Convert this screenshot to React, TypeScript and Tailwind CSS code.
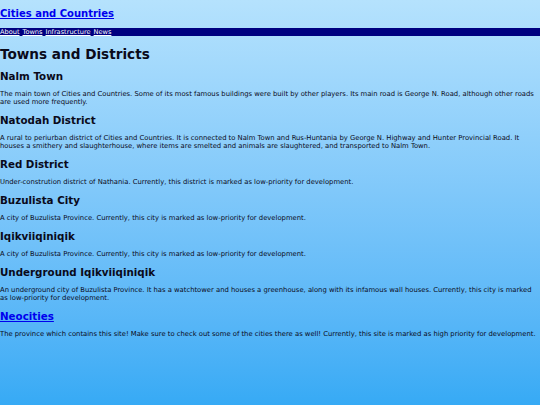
const sections = [
  {
    title: 'Nalm Town',
    text: 'The main town of Cities and Countries. Some of its most famous buildings were built by other players. Its main road is George N. Road, although other roads are used more frequently.',
  },
  {
    title: 'Natodah District',
    text: 'A rural to periurban district of Cities and Countries. It is connected to Nalm Town and Rus-Huntania by George N. Highway and Hunter Provincial Road. It houses a smithery and slaughterhouse, where items are smelted and animals are slaughtered, and transported to Nalm Town.',
  },
  {
    title: 'Red District',
    text: 'Under-constrution district of Nathania. Currently, this district is marked as low-priority for development.',
  },
  {
    title: 'Buzulista City',
    text: 'A city of Buzulista Province. Currently, this city is marked as low-priority for development.',
  },
  {
    title: 'Iqikviiqiniqik',
    text: 'A city of Buzulista Province. Currently, this city is marked as low-priority for development.',
  },
  {
    title: 'Underground Iqikviiqiniqik',
    text: 'An underground city of Buzulista Province. It has a watchtower and houses a greenhouse, along with its infamous wall houses. Currently, this city is marked as low-priority for development.',
  },
]

export default function App() {
  return (
    <div
      className="min-h-[405px] w-[540px] bg-gradient-to-b from-[#b5e2fd] to-[#36aaf5] text-[#0a0a1a]"
      style={{ fontFamily: '"DejaVu Sans", Verdana, sans-serif' }}
    >
      {/* Header */}
      <header className="pt-[6px] pb-[6px]">
        <a href="#" className="block text-[10px] leading-[16px] font-bold text-[#0000ee] underline">
          Cities and Countries
        </a>
      </header>

      {/* Nav */}
      <nav className="flex gap-[3px] bg-[#000080] h-[8px] text-[6.6px] leading-[8px] text-white">
        <a href="#" className="underline">About</a>
        <a href="#" className="underline">Towns</a>
        <a href="#" className="underline">Infrastructure</a>
        <a href="#" className="underline">News</a>
      </nav>

      <main className="pt-[9px] pb-4">
        <h1 className="text-[13.6px] leading-[18px] font-bold mb-[6px]">Towns and Districts</h1>

        {sections.map((s) => (
          <section key={s.title}>
            <h2 className="text-[10.3px] leading-[14px] font-bold mb-[7px]">{s.title}</h2>
            <p className="text-[6.8px] leading-[8px] mb-[7px]">{s.text}</p>
          </section>
        ))}

        <section>
          <h2 className="text-[10.3px] leading-[14px] font-bold mb-[7px]">
            <a href="#" className="text-[#0000ee] underline">Neocities</a>
          </h2>
          <p className="text-[6.8px] leading-[8px]">
            The province which contains this site! Make sure to check out some of the cities there as well! Currently, this site is marked as high priority for development.
          </p>
        </section>
      </main>
    </div>
  )
}
